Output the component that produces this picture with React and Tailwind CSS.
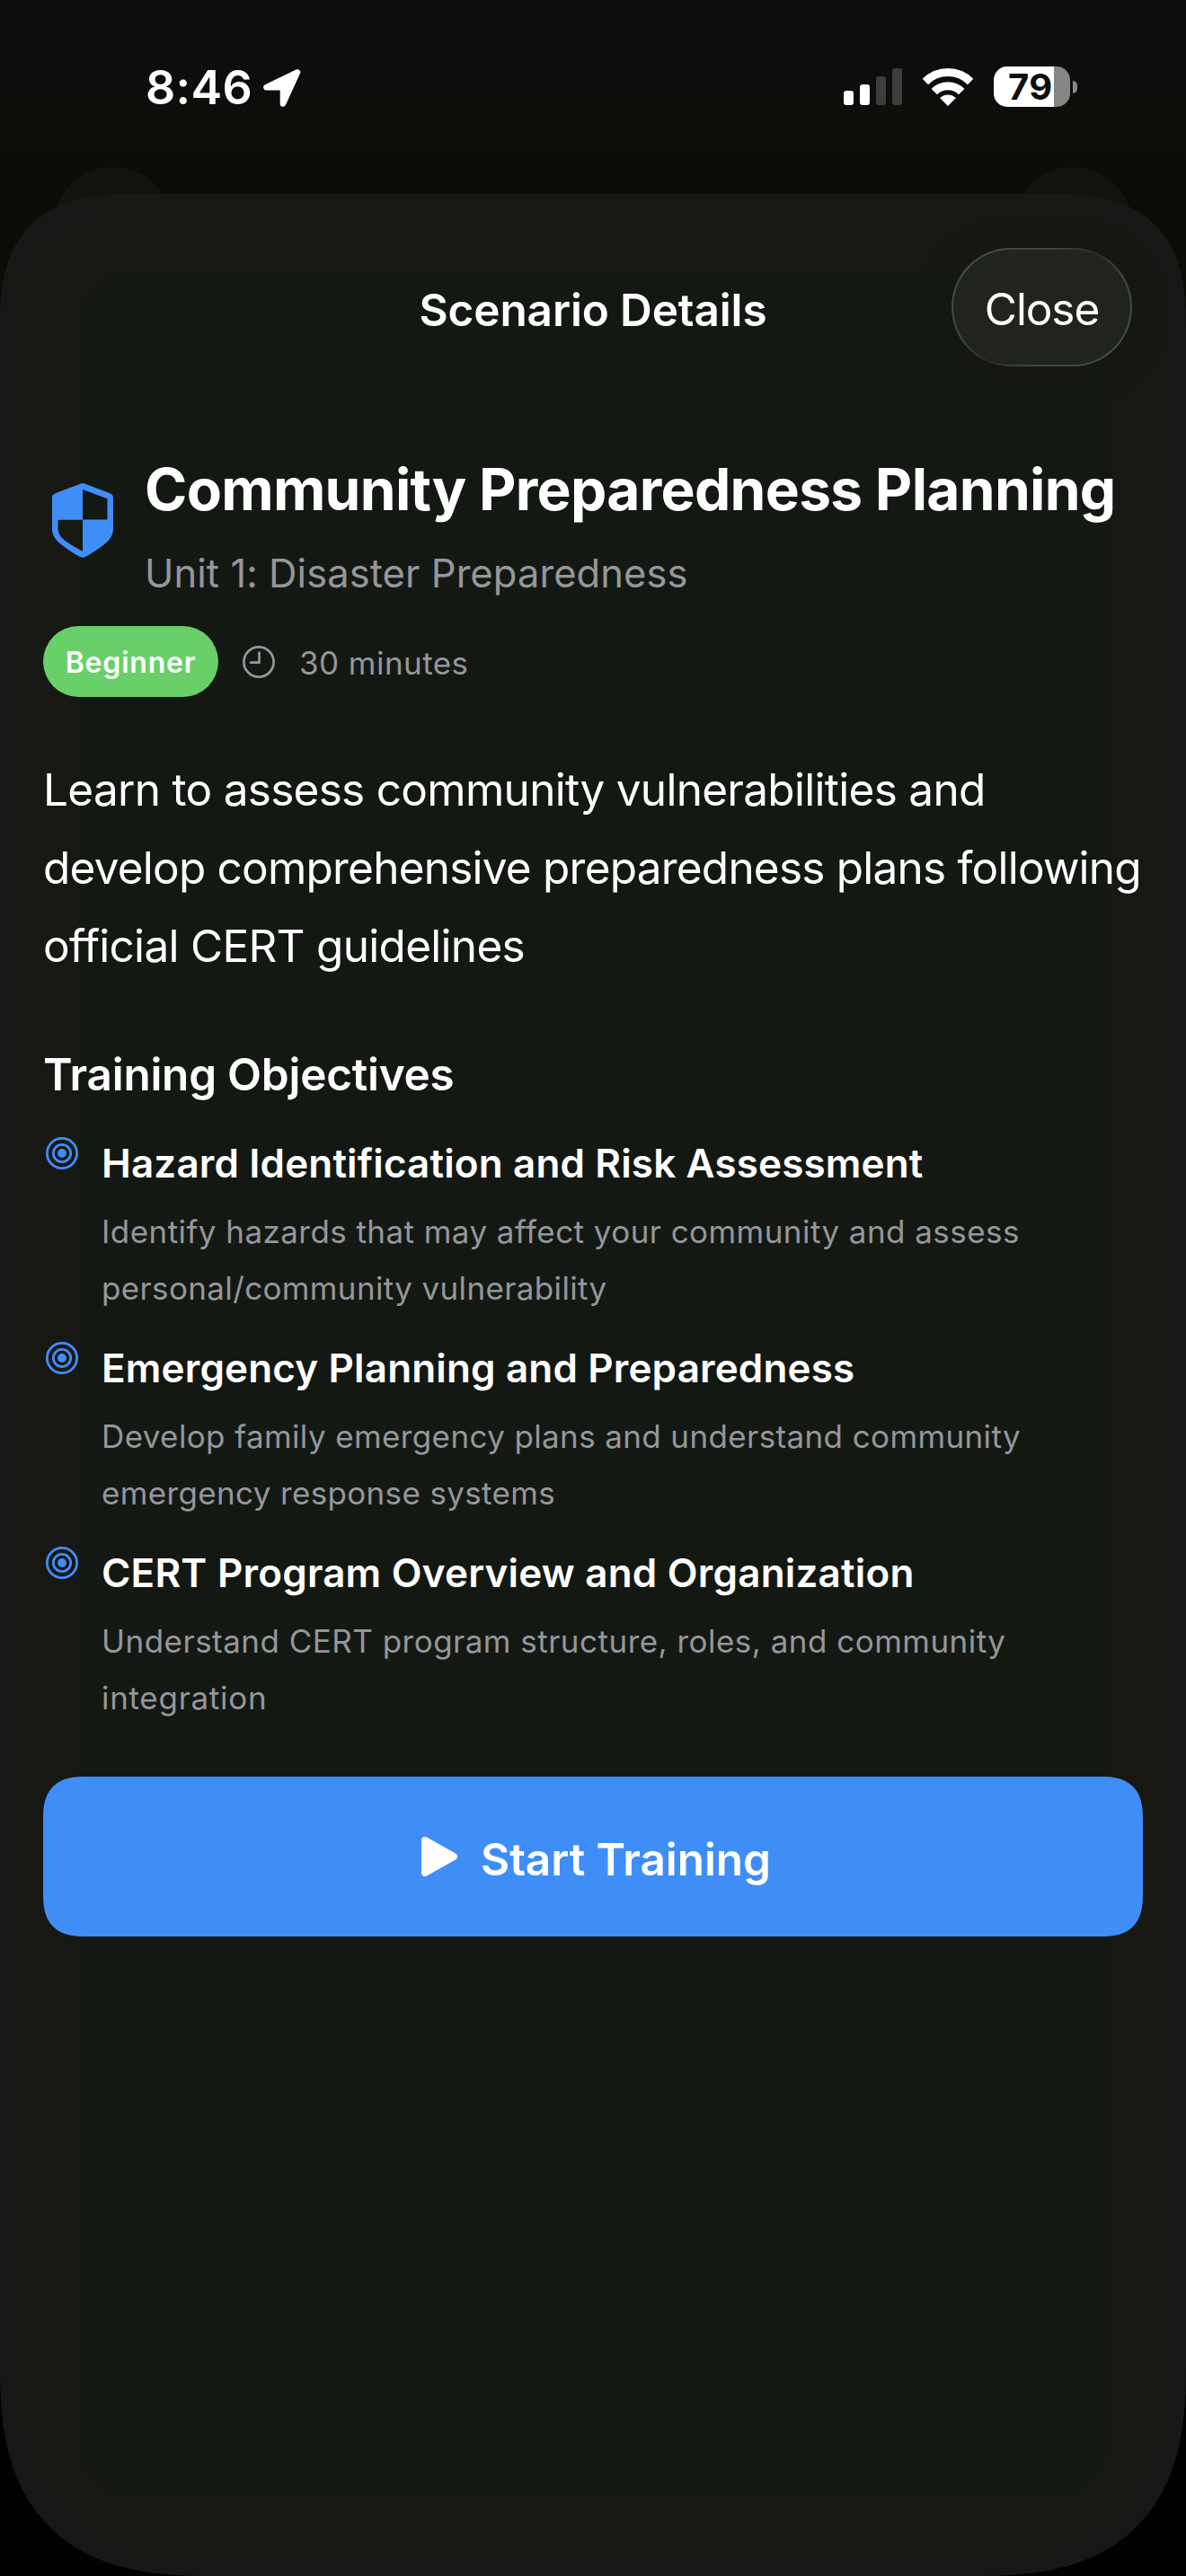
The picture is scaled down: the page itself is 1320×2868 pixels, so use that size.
import React from 'react';

const objectives = [
  {
    title: 'Hazard Identification and Risk Assessment',
    spacing: 'tracking-[0.14px]',
    lines: [
      ['Identify hazards that may affect your community and assess', 'tracking-[0.44px]'],
      ['personal/community vulnerability', 'tracking-[0.36px]'],
    ],
  },
  {
    title: 'Emergency Planning and Preparedness',
    spacing: 'tracking-[0.15px]',
    lines: [
      ['Develop family emergency plans and understand community', 'tracking-[0.38px]'],
      ['emergency response systems', 'tracking-[0.35px]'],
    ],
  },
  {
    title: 'CERT Program Overview and Organization',
    spacing: 'tracking-[0.2px]',
    lines: [
      ['Understand CERT program structure, roles, and community', 'tracking-[0.48px]'],
      ['integration', 'tracking-[0.7px]'],
    ],
  },
];

function LocationIcon() {
  return (
    <svg className="h-[42px] w-[42px]" viewBox="0 0 42 42" fill="#fff" stroke="#fff" strokeWidth="6.6" strokeLinejoin="round">
      <path d="M38 3.5 3.5 20.2H22v18.3Z" />
    </svg>
  );
}

function WifiIcon() {
  return (
    <svg className="h-[42px] w-[58px]" viewBox="0 0 58 42" fill="none" stroke="#fff" strokeWidth="9">
      <path d="M3.9 15A35.5 35.5 0 0 1 54.1 15" />
      <path d="M13.8 26.2A21.3 21.3 0 0 1 44.2 26.2" />
      <path d="M29 41.5 20.6 33A13 13 0 0 1 37.4 33Z" fill="#fff" stroke="#fff" strokeWidth="1" strokeLinejoin="round" />
    </svg>
  );
}

function ShieldIcon() {
  return (
    <svg className="h-[83px] w-[68px]" viewBox="0 0 68 83" fill="#3f8ef8" fillRule="evenodd">
      <path d="M31.8.5Q34-.4 36.2.5L64.500 11.2Q68 12.700 68 16.500V50C68 58.500 64 63.500 57.500 68.500C51 73.500 44 78 37 82Q34 83.600 31 82C24 78 17 73.500 10.500 68.500C4 63.500 0 58.500 0 50V16.500Q0 12.700 3.500 11.200ZM34 7V40.500H61.500V17.200ZM6.500 40.800V50C6.500 56 9.500 60 14.500 64C20.500 68.700 27 72.300 34 75.700V40.800Z" />
    </svg>
  );
}

function ClockIcon() {
  return (
    <svg className="h-9 w-9" viewBox="0 0 36 36" fill="none" stroke="#95969b" strokeWidth="2.7" strokeLinecap="round" strokeLinejoin="round">
      <circle cx="18" cy="18" r="16.600" />
      <path d="M18.500 7.500v11.200H9" />
    </svg>
  );
}

function TargetIcon() {
  return (
    <svg className="h-9 w-9 shrink-0" viewBox="0 0 36 36" fill="none" stroke="#3f8ef8" strokeWidth="2.8">
      <circle cx="18" cy="18" r="16.600" />
      <circle cx="18" cy="18" r="9.700" />
      <circle cx="18" cy="18" r="5" fill="#3f8ef8" stroke="none" />
    </svg>
  );
}

function PlayIcon() {
  return (
    <svg className="h-[46px] w-[41px]" viewBox="0 0 41 46" fill="#fff" stroke="#fff" strokeWidth="8" strokeLinejoin="round">
      <path d="M4 5 36 23 4 41Z" />
    </svg>
  );
}

function StatusBar() {
  return (
    <div className="flex h-[216px] items-start justify-between pt-[70px] pr-[121px] pl-[162px]">
      <div className="flex items-center">
        <span className="w-[131px] text-[52px] leading-[56px] font-semibold tracking-[0.3px] text-white">8:46</span>
        <LocationIcon />
      </div>
      <div className="flex h-[56px] items-center">
        <div className="mt-[-3px] mr-[22px] flex h-[41px] items-end gap-[7px]">
          <span className="h-4 w-[11px] rounded-[3px] bg-white" />
          <span className="h-[23px] w-[11px] rounded-[3px] bg-white" />
          <span className="h-8 w-[11px] rounded-[3px] bg-[#3d3d3b]" />
          <span className="h-[41px] w-[11px] rounded-[3px] bg-[#3d3d3b]" />
        </div>
        <div className="mt-[-3px] mr-[22px]">
          <WifiIcon />
        </div>
        <div className="mt-[-3px] flex items-center gap-[3px]">
          <div className="flex h-[45px] w-[85px] items-center rounded-[15px] bg-[linear-gradient(90deg,#fff_67px,#868684_67px)] pl-4">
            <span className="text-[40px] leading-[50px] font-bold tracking-[0.5px] text-[#0e0f0c]">79</span>
          </div>
          <span className="h-[14px] w-[5px] rounded-r-full bg-[#868684]" />
        </div>
      </div>
    </div>
  );
}

function Header() {
  return (
    <div className="grid h-[132px] grid-cols-[1fr_auto_1fr] items-center pr-3">
      <span />
      <h1 className="col-start-2 ml-3 pt-[6px] text-[49.5px] leading-[60px] font-semibold tracking-[-0.12px] whitespace-nowrap text-white">
        Scenario Details
      </h1>
      <button className="h-[132px] w-[201px] justify-self-end rounded-full bg-[linear-gradient(135deg,#47523f_0%,#3d4837_35%,#272b23_50%,#3d4837_65%,#47523f_100%)] p-[2px] shadow-[0_6px_30px_4px_#161713]">
        <span className="flex h-full w-full items-center justify-center rounded-full bg-[#21241e] pt-1 text-[49.5px] font-normal tracking-[-1.09px] text-white">
          Close
        </span>
      </button>
    </div>
  );
}

function Objective({ title, spacing, lines }) {
  return (
    <li className="flex h-[200px] items-start pl-[3px]">
      <TargetIcon />
      <div className="ml-[26px] pt-[2px] whitespace-nowrap">
        <h3 className={`text-[44px] leading-[54px] font-semibold text-white ${spacing}`}>{title}</h3>
        <p className="mt-[18px] text-[35px] leading-[63px] text-[#95969b]">
          {lines.map(([text, track]) => (
            <span key={text} className={`block ${track}`}>{text}</span>
          ))}
        </p>
      </div>
    </li>
  );
}

export default function App() {
  return (
    <div className="relative h-[2868px] w-[1320px] overflow-hidden bg-[linear-gradient(180deg,#0e0e0e_0px,#0c0e0a_140px,#0a0c08_216px,#0a0c08_420px,#000200_1200px)] font-[Inter,sans-serif]">
      <span className="absolute top-[186px] left-[60px] h-[132px] w-[132px] rounded-full bg-[#11130f]" />
      <span className="absolute top-[186px] left-[1128px] h-[132px] w-[132px] rounded-full bg-[#11130f]" />
      <StatusBar />
      <main className="relative isolate h-[2652px] rounded-t-[149px] rounded-b-[238px] bg-[#171814] px-12 pt-[60px] shadow-[inset_0_0_0_22px_#161816] [corner-shape:superellipse(1.4)]">
        <span className="absolute inset-x-[88px] top-[89px] bottom-[91px] -z-10 rounded-[56px] bg-[#141813]" />
        <Header />

        <section className="mt-[97px] flex">
          <div className="w-[113px] pt-[33px] pl-[10px]">
            <ShieldIcon />
          </div>
          <div className="whitespace-nowrap">
            <h2 className="text-[64px] leading-[80px] font-bold tracking-[-0.7px] text-white">Community Preparedness Planning</h2>
            <p className="mt-[25px] text-[43.5px] leading-[56px] tracking-[0.07px] text-[#95969b]">Unit 1: Disaster Preparedness</p>
          </div>
        </section>

        <div className="mt-[31px] flex items-center">
          <span className="flex h-[79px] w-[195px] items-center justify-center rounded-full bg-[#68cf69] pt-[3px] text-[32px] font-semibold tracking-[0.79px] text-white">
            Beginner
          </span>
          <span className="ml-[27px]">
            <ClockIcon />
          </span>
          <span className="ml-[27px] pt-[3px] text-[35px] leading-[44px] tracking-[0.44px] text-[#95969b]">30 minutes</span>
        </div>

        <p className="mt-[60px] text-[49.5px] leading-[87px] tracking-[-0.71px] whitespace-nowrap text-white">
          Learn to assess community vulnerabilities and
          <br />
          <span className="tracking-[-0.78px]">develop comprehensive preparedness plans following</span>
          <br />
          official CERT guidelines
        </p>

        <h2 className="mt-[69px] text-[49.5px] leading-[60px] font-semibold tracking-[-0.26px] text-white">Training Objectives</h2>
        <ul className="mt-10 flex flex-col gap-7">
          {objectives.map((o) => (
            <Objective key={o.title} {...o} />
          ))}
        </ul>

        <button className="mt-14 flex h-[178px] w-full items-center rounded-[48px] bg-[#3f8ef8] pl-[421px] [corner-shape:superellipse(1.4)]">
          <PlayIcon />
          <span className="ml-[25px] pt-[6px] text-[49.5px] leading-[60px] font-semibold tracking-[-0.06px] text-white">Start Training</span>
        </button>
      </main>
    </div>
  );
}
